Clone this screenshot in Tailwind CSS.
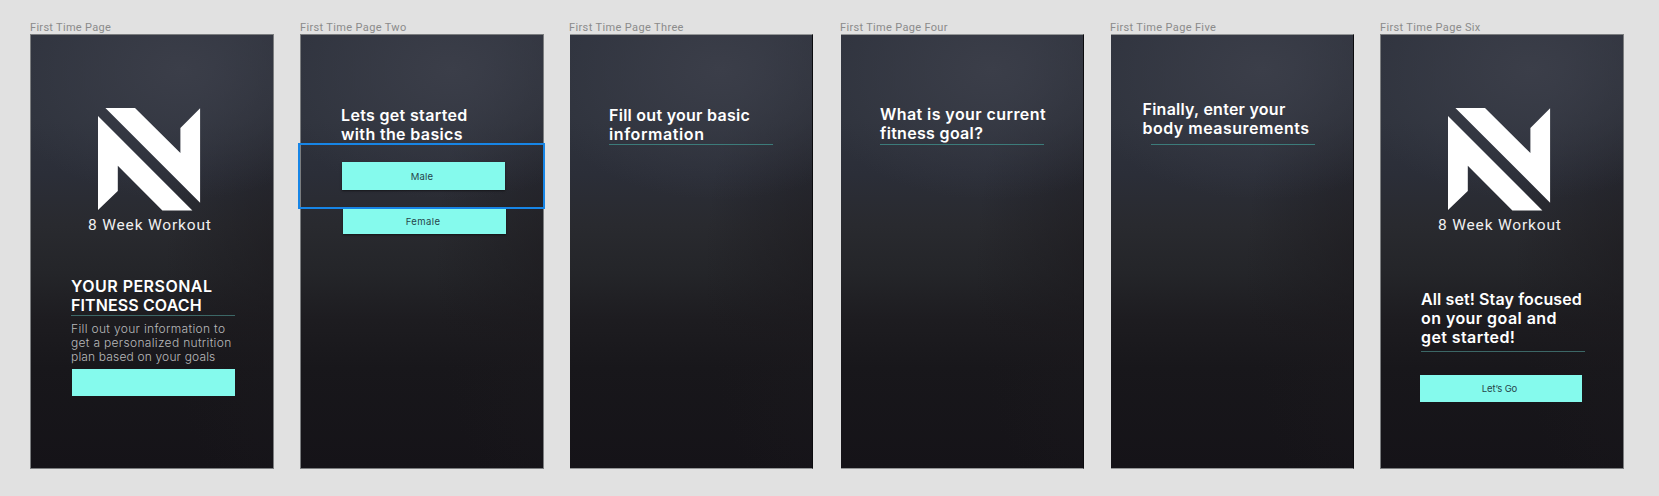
<!DOCTYPE html>
<html lang="en">
<head>
<meta charset="utf-8">
<title>First Time Pages</title>
<script src="https://cdn.jsdelivr.net/npm/@tailwindcss/browser@4"></script>
</head>
<body class="w-[1659px] h-[496px] bg-[#e1e1e1] overflow-hidden font-['Inter',sans-serif] whitespace-nowrap">
<svg class="hidden">
  <symbol id="logo" viewBox="0 0 103 103">
    <path d="M7.4 0H37L82.4 45V20L102.1.3V94.7ZM0 8 94.4 102.4H64.4L19.8 57.8V83L0 102Z"/>
  </symbol>
</svg>
<main class="flex pt-[20px] pl-[30px]">

  <!-- Page one -->
  <section class="w-[244px] mr-[26px] shrink-0">
    <h2 class="h-[14px] leading-[16px] font-[Roboto] text-[11px] tracking-[0.3px] text-[#8b8b8b]">First Time Page</h2>
    <div class="h-[435px] border border-[#7b7d7f] bg-[radial-gradient(ellipse_190px_130px_at_62%_8%,#3b3e49_0%,#3b3e4900_100%),radial-gradient(ellipse_120px_260px_at_105%_55%,#1b191d99_0%,#1b191d00_100%),linear-gradient(180deg,#2f333e_0%,#2f333d_20%,#2b2e38_32%,#292a2f_44%,#242529_55%,#1d1c20_66%,#18171b_77%,#151318_100%)]">
      <svg class="mt-[73px] ml-[67px] w-[103px] h-[103px] fill-white"><use href="#logo"/></svg>
      <p class="mt-[4px] ml-[57px] h-[20px] leading-[20px] font-[Roboto] text-[15.5px] tracking-[0.83px] text-[#f0f0f0]">8 Week Workout</p>
      <div class="mt-[42px] ml-[40px] w-[164px]">
        <h1 class="h-[38px] leading-[19px] text-[16px] font-semibold text-white"><span class="block tracking-[0.47px]">YOUR PERSONAL</span><span class="block tracking-[0.11px]">FITNESS COACH</span></h1>
        <div class="h-px bg-[#3c6766]"></div>
        <p class="mt-[5.5px] h-[43px] leading-[14.3px] text-[12px] font-light text-[#b9b9bb]"><span class="block tracking-[0.33px]">Fill out your information to</span><span class="block tracking-[0.32px]">get a personalized nutrition</span><span class="block tracking-[0.16px]">plan based on your goals</span></p>
        <div class="mt-[4.5px] ml-px h-[27px] bg-[#85faed]"></div>
      </div>
    </div>
  </section>

  <!-- Page two -->
  <section class="relative w-[244px] mr-[26px] shrink-0">
    <h2 class="h-[14px] leading-[16px] font-[Roboto] text-[11px] tracking-[0.35px] text-[#8b8b8b]">First Time Page Two</h2>
    <div class="h-[435px] border border-[#7b7d7f] bg-[radial-gradient(ellipse_190px_130px_at_62%_8%,#3b3e49_0%,#3b3e4900_100%),radial-gradient(ellipse_120px_260px_at_105%_55%,#1b191d99_0%,#1b191d00_100%),linear-gradient(180deg,#2f333e_0%,#2f333d_20%,#2b2e38_32%,#292a2f_44%,#242529_55%,#1d1c20_66%,#18171b_77%,#151318_100%)]">
      <h1 class="mt-[71px] ml-[40px] h-[38px] leading-[19px] text-[16px] font-semibold text-white"><span class="block tracking-[0.33px]">Lets get started</span><span class="block tracking-[0.36px]">with the basics</span></h1>
      <div class="mt-[18px] ml-[41px] w-[163px] h-[28px] leading-[29px] text-center text-[9.5px] tracking-[0.2px] text-[#27454b] bg-[#85faed] pr-[3px] shadow-[0_1px_2px_#00000080]">Male</div>
      <div class="mt-[18px] ml-[42px] w-[163px] h-[26px] leading-[27px] text-center text-[9.5px] tracking-[0.4px] text-[#27454b] bg-[#85faed] pr-[3px] shadow-[0_1px_2px_#00000080]">Female</div>
    </div>
    <!-- Selection frame -->
    <div class="absolute left-[-2px] top-[123px] w-[247px] h-[66px] border-2 border-[#1785e6]"></div>
  </section>

  <!-- Page three -->
  <section class="w-[243px] mr-[28px] shrink-0">
    <h2 class="-ml-px h-[14px] leading-[16px] font-[Roboto] text-[11px] tracking-[0.37px] text-[#8b8b8b]">First Time Page Three</h2>
    <div class="h-[435px] border-y border-y-[#949697] border-r border-r-[#0b0b0e] bg-[radial-gradient(ellipse_190px_130px_at_62%_8%,#3b3e49_0%,#3b3e4900_100%),radial-gradient(ellipse_120px_260px_at_105%_55%,#1b191d99_0%,#1b191d00_100%),linear-gradient(180deg,#2f333e_0%,#2f333d_20%,#2b2e38_32%,#292a2f_44%,#242529_55%,#1d1c20_66%,#18171b_77%,#151318_100%)]">
      <h1 class="mt-[71px] ml-[39px] h-[38px] leading-[19px] text-[16px] font-semibold text-white"><span class="block tracking-[0.27px]">Fill out your basic</span><span class="block tracking-[0.59px]">information</span></h1>
      <div class="ml-[39px] w-[164px] h-px bg-[#3c7b7a]"></div>
    </div>
  </section>

  <!-- Page four -->
  <section class="w-[243px] mr-[27px] shrink-0">
    <h2 class="-ml-px h-[14px] leading-[16px] font-[Roboto] text-[11px] tracking-[0.32px] text-[#8b8b8b]">First Time Page Four</h2>
    <div class="h-[435px] border-y border-y-[#949697] border-r border-r-[#0b0b0e] bg-[radial-gradient(ellipse_190px_130px_at_62%_8%,#3b3e49_0%,#3b3e4900_100%),radial-gradient(ellipse_120px_260px_at_105%_55%,#1b191d99_0%,#1b191d00_100%),linear-gradient(180deg,#2f333e_0%,#2f333d_20%,#2b2e38_32%,#292a2f_44%,#242529_55%,#1d1c20_66%,#18171b_77%,#151318_100%)]">
      <h1 class="mt-[69.5px] ml-[39px] h-[39.5px] leading-[19px] text-[16px] font-semibold text-white"><span class="block tracking-[0.42px]">What is your current</span><span class="block tracking-[0.32px]">fitness goal?</span></h1>
      <div class="ml-[39px] w-[164px] h-px bg-[#3c7b7a]"></div>
    </div>
  </section>

  <!-- Page five -->
  <section class="w-[243px] mr-[26px] shrink-0">
    <h2 class="-ml-px h-[14px] leading-[16px] font-[Roboto] text-[11px] tracking-[0.35px] text-[#8b8b8b]">First Time Page Five</h2>
    <div class="h-[435px] border-y border-y-[#949697] border-r border-r-[#0b0b0e] bg-[radial-gradient(ellipse_190px_130px_at_62%_8%,#3b3e49_0%,#3b3e4900_100%),radial-gradient(ellipse_120px_260px_at_105%_55%,#1b191d99_0%,#1b191d00_100%),linear-gradient(180deg,#2f333e_0%,#2f333d_20%,#2b2e38_32%,#292a2f_44%,#242529_55%,#1d1c20_66%,#18171b_77%,#151318_100%)]">
      <h1 class="mt-[65px] ml-[31.5px] h-[44px] leading-[19px] text-[16px] font-semibold text-white"><span class="block tracking-[0.25px]">Finally, enter your</span><span class="block tracking-[0.5px]">body measurements</span></h1>
      <div class="ml-[40px] w-[164px] h-px bg-[#3c7b7a]"></div>
    </div>
  </section>

  <!-- Page six -->
  <section class="w-[244px] shrink-0">
    <h2 class="h-[14px] leading-[16px] font-[Roboto] text-[11px] tracking-[0.35px] text-[#8b8b8b]">First Time Page Six</h2>
    <div class="h-[435px] border border-[#7b7d7f] bg-[radial-gradient(ellipse_190px_130px_at_62%_8%,#3b3e49_0%,#3b3e4900_100%),radial-gradient(ellipse_120px_260px_at_105%_55%,#1b191d99_0%,#1b191d00_100%),linear-gradient(180deg,#2f333e_0%,#2f333d_20%,#2b2e38_32%,#292a2f_44%,#242529_55%,#1d1c20_66%,#18171b_77%,#151318_100%)]">
      <svg class="mt-[73px] ml-[67px] w-[103px] h-[103px] fill-white"><use href="#logo"/></svg>
      <p class="mt-[4px] ml-[57px] h-[20px] leading-[20px] font-[Roboto] text-[15.5px] tracking-[0.83px] text-[#f0f0f0]">8 Week Workout</p>
      <h1 class="mt-[55px] ml-[40px] h-[61px] leading-[19px] text-[16px] font-semibold text-white"><span class="block tracking-[0.11px]">All set! Stay focused</span><span class="block tracking-[0.44px]">on your goal and</span><span class="block tracking-[0.4px]">get started!</span></h1>
      <div class="ml-[40px] w-[164px] h-px bg-[#3c6766]"></div>
      <div class="mt-[23px] ml-[39px] w-[162px] h-[27px] leading-[28px] text-center text-[9.5px] tracking-[-0.1px] text-[#27454b] bg-[#85faed] pr-[3px]">Let’s Go</div>
    </div>
  </section>
</main>
</body>
</html>
